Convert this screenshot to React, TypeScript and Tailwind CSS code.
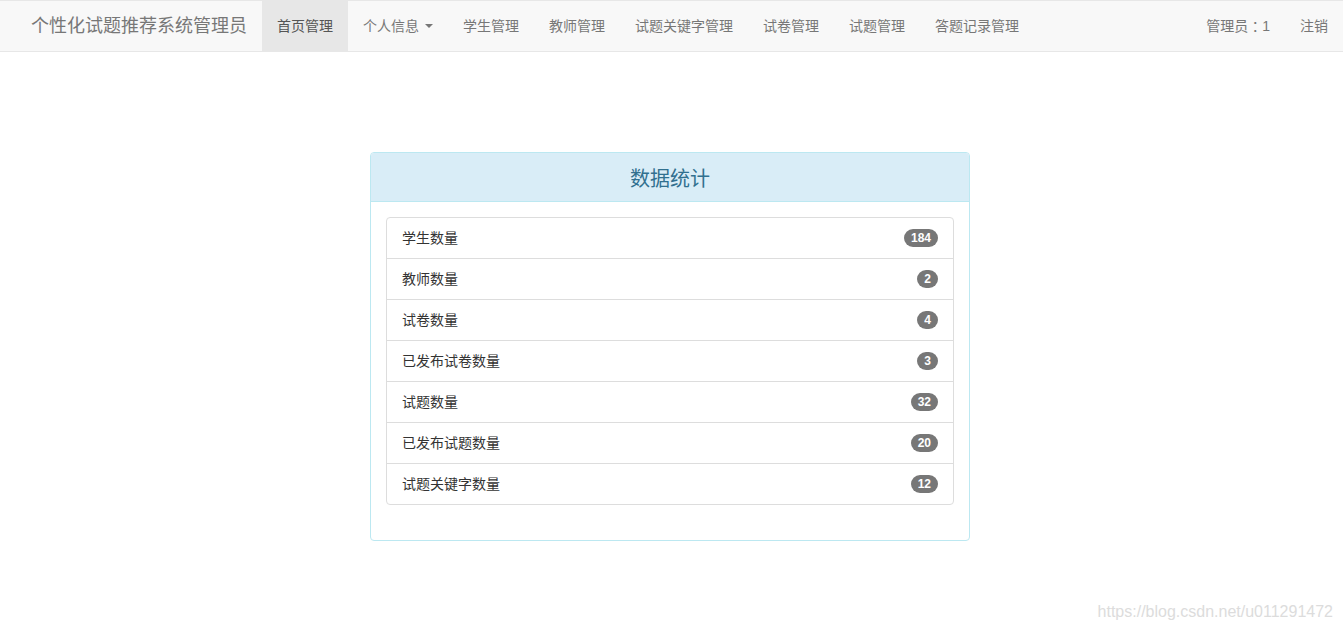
import React from "react";

const font = { fontFamily: '"Liberation Sans", Arial, "Noto Sans CJK SC", sans-serif' };

const navItems = ["学生管理", "教师管理", "试题关键字管理", "试卷管理", "试题管理", "答题记录管理"];

const stats: [string, string][] = [
  ["学生数量", "184"],
  ["教师数量", "2"],
  ["试卷数量", "4"],
  ["已发布试卷数量", "3"],
  ["试题数量", "32"],
  ["已发布试题数量", "20"],
  ["试题关键字数量", "12"],
];

export default function App() {
  return (
    <div style={font} className="relative h-[632px] w-full bg-white text-[14px] text-[#333]">
      <nav className="flex h-[52px] items-stretch border-y border-[#e7e7e7] bg-[#f8f8f8]">
        <a className="flex items-center pl-[31px] pr-[15px] text-[18px] text-[#777]">个性化试题推荐系统管理员</a>
        <a className="flex items-center bg-[#e7e7e7] px-[15px] text-[#555]">首页管理</a>
        <a className="flex items-center px-[15px] text-[#777]">
          个人信息
          <span className="ml-[6px] inline-block h-0 w-0 border-x-[4px] border-t-[4px] border-x-transparent border-t-[#777]" />
        </a>
        {navItems.map((t) => (
          <a key={t} className="flex items-center px-[15px] text-[#777]">
            {t}
          </a>
        ))}
        <div className="ml-auto flex">
          <a className="flex items-center px-[15px] text-[#777]">
            管理员<span className="font-['Noto_Sans_CJK_JP',sans-serif]">：</span>1
          </a>
          <a className="flex items-center px-[15px] text-[#777]">注销</a>
        </div>
      </nav>

      <div className="mt-[100px] flex justify-center pr-[3px]">
        <div className="w-[600px] rounded-[4px] border border-[#bce8f1] bg-white">
          <div className="flex h-[49px] items-center justify-center rounded-t-[3px] border-b border-[#bce8f1] bg-[#d9edf7] pt-[3px]">
            <h3 className="text-[20px] text-[#31708f]">数据统计</h3>
          </div>
          <div className="p-[15px]">
            <ul className="mb-[20px]">
              {stats.map(([label, n], i) => (
                <li
                  key={label}
                  className={`flex h-[42px] items-center justify-between border border-[#ddd] px-[15px] ${
                    i > 0 ? "-mt-px" : ""
                  } ${i === 0 ? "rounded-t-[4px]" : ""} ${i === stats.length - 1 ? "rounded-b-[4px]" : ""}`}
                >
                  <span>{label}</span>
                  <span className="rounded-[10px] bg-[#777] px-[7px] py-[3px] text-[12px] font-bold leading-none text-white">
                    {n}
                  </span>
                </li>
              ))}
            </ul>
          </div>
        </div>
      </div>

      <div className="absolute bottom-[8px] right-[10px] text-[16px] text-[#dcdcdc]">https://blog.csdn.net/u011291472</div>
    </div>
  );
}
